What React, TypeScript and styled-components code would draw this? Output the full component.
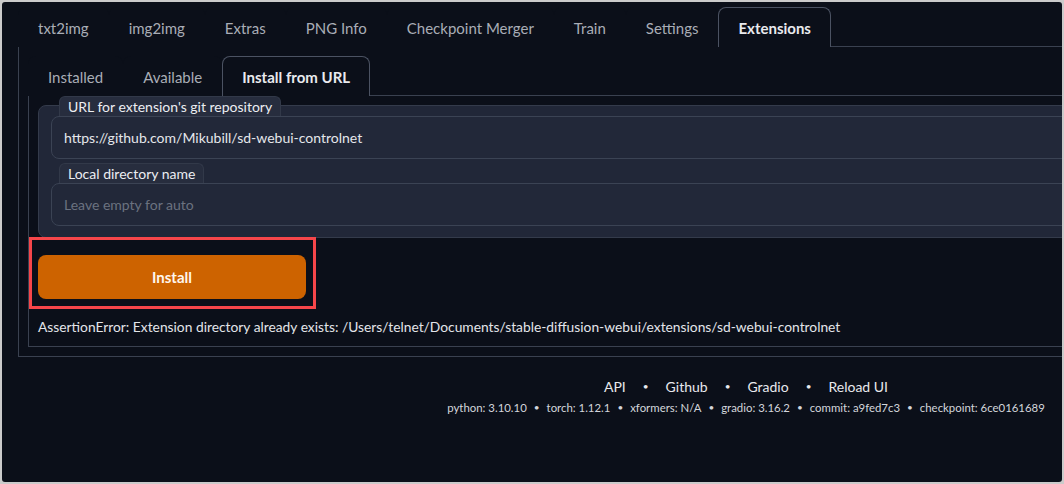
import React from 'react'
import styled, { createGlobalStyle } from 'styled-components'

const GlobalStyle = createGlobalStyle`
  html, body {
    margin: 0;
    padding: 0;
    background: #cbcbcb;
  }
  * {
    box-sizing: border-box;
  }
`

const Frame = styled.div`
  margin: 2px;
  height: 480px;
  width: 1060px;
  background: #0b0f19;
  border-radius: 3px;
  overflow: hidden;
  font-family: Lato, 'Noto Sans', sans-serif;
  color: #e5e7eb;
`

const Page = styled.div`
  width: 1488px;
  padding: 5px 16px 0;
`

const TabBar = styled.div`
  display: flex;
  border-bottom: 1px solid #3a4150;
`

const Tab = styled.div<{ $active?: boolean }>`
  height: 40px;
  display: flex;
  align-items: center;
  padding: 0 19px;
  font-size: 15px;
  color: ${(p) => (p.$active ? '#e9eaee' : '#a9adb6')};
  font-weight: ${(p) => (p.$active ? 700 : 400)};
  border: 1px solid ${(p) => (p.$active ? '#4b5262' : 'transparent')};
  border-bottom: none;
  border-radius: 8px 8px 0 0;
  background: #0b0f19;
  margin-bottom: -1px;
  cursor: pointer;
`

const TabPanel = styled.div`
  border: 1px solid #3a4150;
  border-top: none;
  padding: 9px;
`

const Block = styled.div`
  display: flex;
  flex-direction: column;
  background: #212738;
  border: 1px solid #343b4b;
  border-radius: 8px;
  padding: 0 12px 11px;
`

const FieldLabel = styled.span<{ $first?: boolean }>`
  align-self: flex-start;
  margin: ${(p) => (p.$first ? '-10px' : '4px')} 0 0 8px;
  height: 20px;
  line-height: 20px;
  padding: 0 8px;
  font-size: 14px;
  color: #eceef2;
  background: #272d3e;
  border: 1px solid #323949;
  border-bottom: none;
  border-radius: 6px 6px 0 0;
`

const TextInput = styled.input`
  height: 43px;
  width: 100%;
  padding: 0 12px;
  font-family: inherit;
  font-size: 14px;
  color: #e5e7eb;
  background: #222839;
  border: 1px solid #3b4354;
  border-radius: 8px;
  outline: none;

  &::placeholder {
    color: #6b7280;
  }
`

const ButtonRow = styled.div`
  display: flex;
  margin-top: 17px;
`

const Highlight = styled.div`
  position: relative;
`

// red annotation frame drawn over the button
const HighlightBox = styled.div`
  position: absolute;
  top: -18px;
  left: -9px;
  right: -10px;
  bottom: -10px;
  border: 3px solid #f6464a;
  pointer-events: none;
`

const InstallButton = styled.button`
  width: 268px;
  height: 44px;
  border: none;
  border-radius: 8px;
  background: #cd6300;
  color: #fff6ee;
  font-family: inherit;
  font-size: 15px;
  font-weight: 700;
  cursor: pointer;
`

const ErrorText = styled.div`
  margin-top: 18px;
  font-size: 13.8px;
  line-height: 20px;
  color: #e3e5ea;
`

const Footer = styled.div`
  display: flex;
  flex-direction: column;
  align-items: center;
  margin-top: 19px;
`

const FooterLinks = styled.div`
  display: flex;
  align-items: center;
  height: 20px;
  font-size: 14px;
  color: #e8e9ed;
`

const FooterInfo = styled.div`
  display: flex;
  align-items: center;
  height: 16px;
  margin-top: 3px;
  font-size: 11.4px;
  color: #d3d6dc;
`

const Sep = styled.span<{ $gap: number }>`
  margin: 0 ${(p) => p.$gap}px;
  font-size: 10px;
`

const topTabs = [
  'txt2img',
  'img2img',
  'Extras',
  'PNG Info',
  'Checkpoint Merger',
  'Train',
  'Settings',
  'Extensions',
]

const extTabs = ['Installed', 'Available', 'Install from URL']

const links = ['API', 'Github', 'Gradio', 'Reload UI']

const versions = [
  'python: 3.10.10',
  'torch: 1.12.1',
  'xformers: N/A',
  'gradio: 3.16.2',
  'commit: a9fed7c3',
  'checkpoint: 6ce0161689',
]

const joinWithDots = (items: string[], gap: number) =>
  items.map((item, i) => (
    <React.Fragment key={item}>
      {i > 0 && <Sep $gap={gap}>•</Sep>}
      <span>{item}</span>
    </React.Fragment>
  ))

const App: React.FC = () => {
  return (
    <>
      <GlobalStyle />
      <Frame>
        <Page>
          <TabBar>
            {topTabs.map((t) => (
              <Tab key={t} $active={t === 'Extensions'}>
                {t}
              </Tab>
            ))}
          </TabBar>
          <TabPanel>
            <TabBar>
              {extTabs.map((t) => (
                <Tab key={t} $active={t === 'Install from URL'}>
                  {t}
                </Tab>
              ))}
            </TabBar>
            <TabPanel>
              <Block>
                <FieldLabel $first>URL for extension's git repository</FieldLabel>
                <TextInput
                  readOnly
                  value="https://github.com/Mikubill/sd-webui-controlnet"
                />
                <FieldLabel>Local directory name</FieldLabel>
                <TextInput placeholder="Leave empty for auto" />
              </Block>
              <ButtonRow>
                <Highlight>
                  <InstallButton>Install</InstallButton>
                  <HighlightBox />
                </Highlight>
              </ButtonRow>
              <ErrorText>
                AssertionError: Extension directory already exists:
                /Users/telnet/Documents/stable-diffusion-webui/extensions/sd-webui-controlnet
              </ErrorText>
            </TabPanel>
          </TabPanel>
          <Footer>
            <FooterLinks>{joinWithDots(links, 17)}</FooterLinks>
            <FooterInfo>{joinWithDots(versions, 7)}</FooterInfo>
          </Footer>
        </Page>
      </Frame>
    </>
  )
}

export default App
